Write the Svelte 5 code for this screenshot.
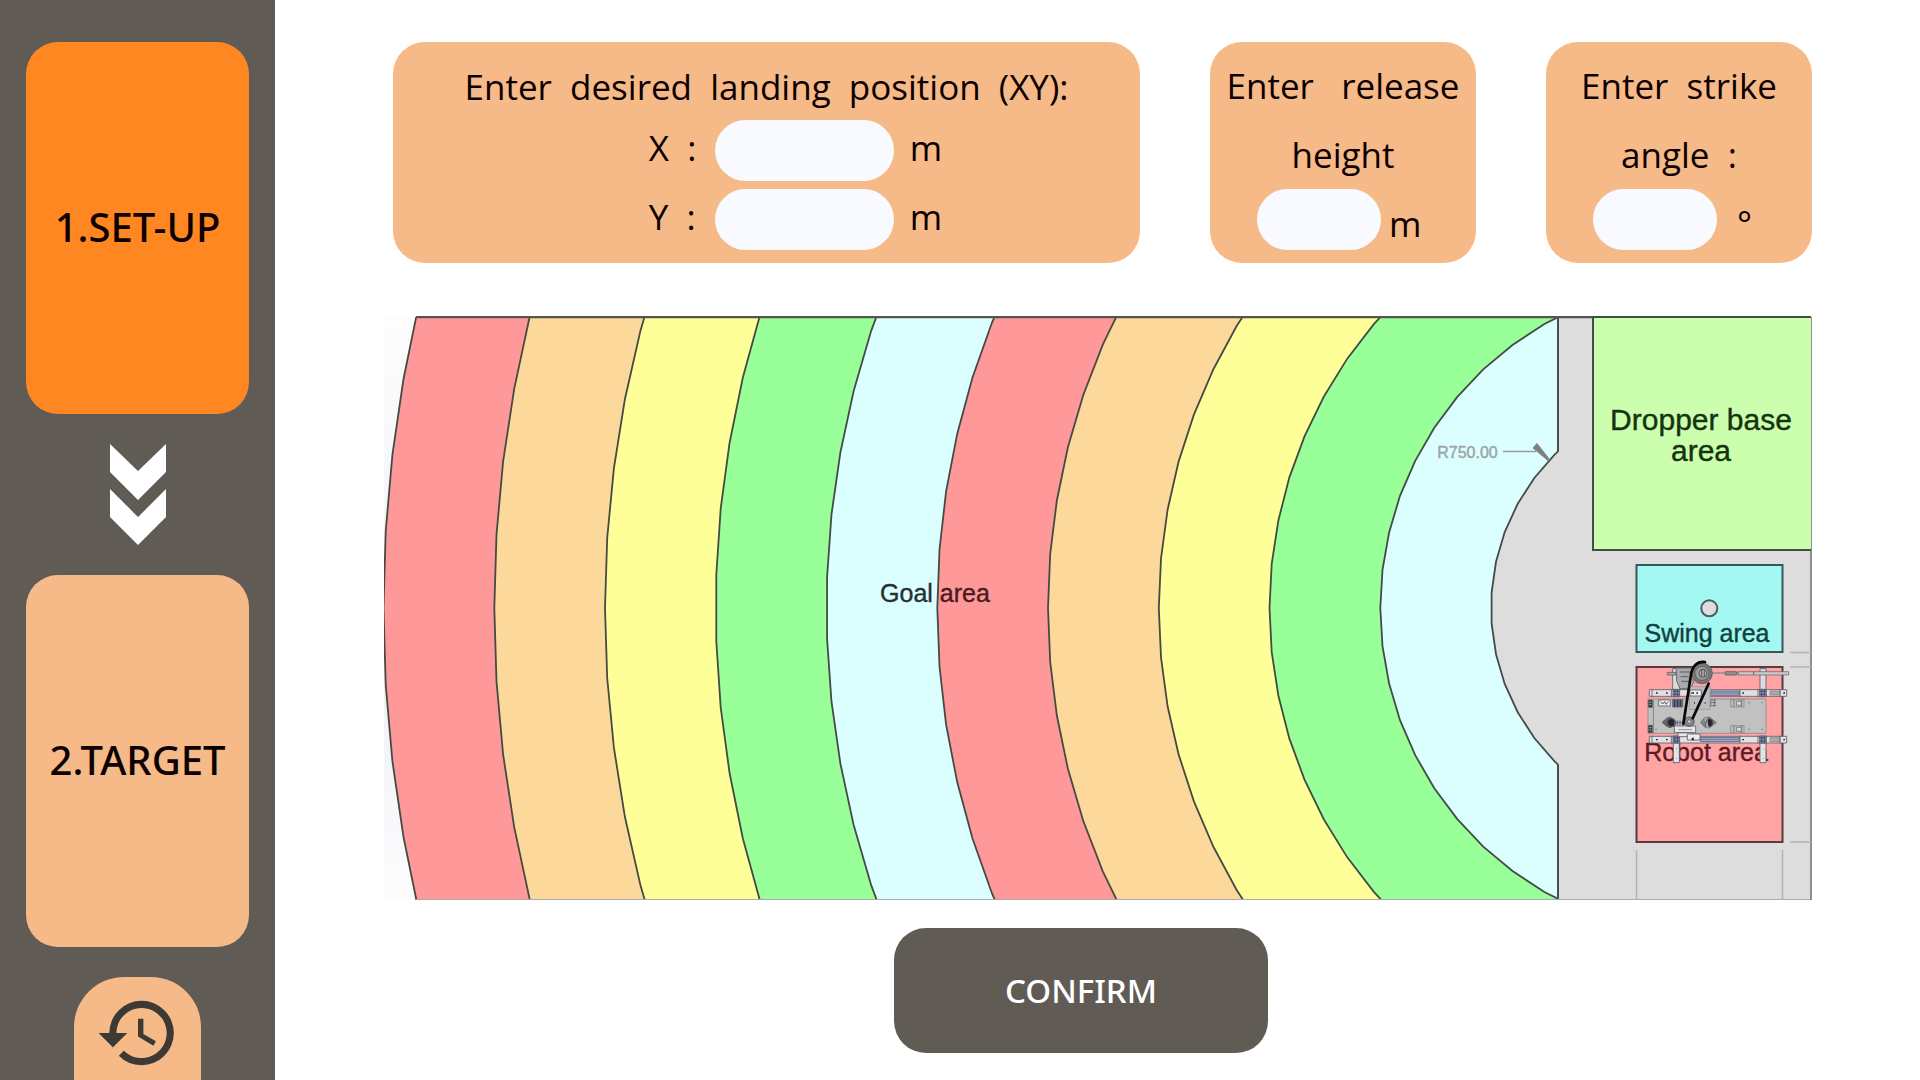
<script>
  let x = $state('');
  let y = $state('');
  let height = $state('');
  let angle = $state('');

  // Field geometry: concentric goal rings around the swing pivot.
  const cx = 1708;
  const cy = 608;
  const innerRadius = 217;
  const ringWidth = 110.75;
  const palette = ['#ff9999', '#fcd89b', '#ffff99', '#99ff99', '#dbffff'];

  // Edges that have a flat facet, not a corner, at the middle.
  const flatMiddle = [3, 4, 10];

  // Each ring edge is a faceted half circle, with coarser facets on small radii.
  function edge(radius, phase) {
    const step = 8.2 * Math.sqrt(innerRadius / radius);
    const count = Math.ceil(90 / step);
    const points = [];
    for (let i = -count; i <= count; i++) {
      const a = ((i + phase) * step * Math.PI) / 180;
      points.push(`${(cx - radius * Math.cos(a)).toFixed(1)},${(cy + radius * Math.sin(a)).toFixed(1)}`);
    }
    return points.join(' ');
  }

  const rings = Array.from({ length: 11 }, (_, i) => ({
    points: edge(innerRadius + ringWidth * (10 - i), flatMiddle.includes(i) ? 0.5 : 0),
    fill: i < 10 ? palette[i % 5] : '#dddddd'
  }));
</script>

<div class="app">
  <nav class="sidebar" aria-label="Steps">
    <button class="step active" type="button">1.SET-UP</button>
    <svg class="chevrons" viewBox="0 0 56 101" aria-hidden="true">
      <path d="M0 0 28 27 56 0V28L28 56 0 28ZM0 45 28 73 56 45V73L28 101 0 73Z" fill="#fff" />
    </svg>
    <button class="step" type="button">2.TARGET</button>
    <button class="history" type="button" aria-label="History">
      <svg viewBox="0 0 24 24" aria-hidden="true">
        <path
          fill="#3d3935"
          d="M13 3a9 9 0 0 0-9 9H1l3.89 3.89.07.14L9 12H6c0-3.87 3.13-7 7-7s7 3.13 7 7-3.13 7-7 7c-1.93 0-3.68-.79-4.94-2.06l-1.42 1.42A8.95 8.95 0 0 0 13 21a9 9 0 0 0 0-18zm-1 5v5l4.28 2.54.72-1.21-3.5-2.08V8H12z"
        />
      </svg>
    </button>
  </nav>

  <main>
    <form class="cards" id="setup" onsubmit={(e) => e.preventDefault()}>
      <fieldset class="card position">
        <legend class="title">Enter&nbsp; desired&nbsp; landing&nbsp; position&nbsp; (XY):</legend>
        <div class="row">
          <label for="pos-x">X&nbsp; :</label>
          <input id="pos-x" type="text" bind:value={x} />
          <span>m</span>
        </div>
        <div class="row">
          <label for="pos-y">Y&nbsp; :</label>
          <input id="pos-y" type="text" bind:value={y} />
          <span>m</span>
        </div>
      </fieldset>

      <div class="card small">
        <label for="height">Enter&nbsp;&nbsp; release<br />height</label>
        <div class="row">
          <input id="height" type="text" bind:value={height} />
          <span>m</span>
        </div>
      </div>

      <div class="card small">
        <label for="angle">Enter&nbsp; strike<br />angle&nbsp; :</label>
        <div class="row degrees">
          <input id="angle" type="text" bind:value={angle} />
          <span>°</span>
        </div>
      </div>
    </form>

    <svg class="field" viewBox="384 316 1428 584" role="img" aria-label="Field map">
      <defs>
        <clipPath id="goal"><rect x="384" y="317" width="1174" height="583" /></clipPath>
        <linearGradient id="corner" x1="0" y1="0" x2="0" y2="1">
          <stop offset="0" stop-color="#fdfdfd" />
          <stop offset="0.6" stop-color="#eef0f6" />
          <stop offset="1" stop-color="#fdfdfd" />
        </linearGradient>
      </defs>

      <rect x="384" y="317" width="60" height="583" fill="url(#corner)" />
      <rect x="1557" y="317" width="254" height="583" fill="#dddddd" />
      <g clip-path="url(#goal)" stroke="#444a44" stroke-width="1.8">
        {#each rings as ring}
          <polygon points={ring.points} fill={ring.fill} />
        {/each}
      </g>

      <g fill="none" stroke="#47505a" stroke-width="2">
        <path d="M1558 317V452M1558 764V900" />
        <path d="M416 317H1811" stroke="#55554f" stroke-width="2.4" />
        <path d="M416 899.500H1811" stroke="#aaa" stroke-width="1" />
        <path d="M1811 317V900" stroke="#777" stroke-width="1.600" />
      </g>

      <path d="M1811 317H1593V550H1811" fill="#ccffad" stroke="#405040" stroke-width="2" />
      <rect x="1636.500" y="565" width="146" height="87" fill="#a3f9f1" stroke="#34575a" stroke-width="2" />
      <rect x="1636.500" y="667" width="146" height="175" fill="#ffa3a5" stroke="#5a3a3e" stroke-width="2" />
      <circle cx="1709.300" cy="608.300" r="8" fill="#dddddd" stroke="#4b5d60" stroke-width="2" />
      <path
        d="M1790 652.500H1811M1790 667H1811M1790 842H1811M1636.500 850V900M1782.500 850V900"
        stroke="#b4b4b4"
        stroke-width="1.500"
      />

      <path d="M1503 451.500H1536" stroke="#999" stroke-width="1.300" />
      <path d="M1533 448 1537 443.500 1549.500 459.500 1548 460.500Z" fill="#808080" stroke="#808080" />

      <g class="labels">
        <text x="1701" y="430" font-size="30" fill="#16330f" stroke="#16330f">Dropper base</text>
        <text x="1701" y="461" font-size="30" fill="#16330f" stroke="#16330f">area</text>
        <text x="1707" y="642" font-size="25" fill="#123f40" stroke="#123f40">Swing area</text>
        <text x="1706" y="761" font-size="25" fill="#5e1a22" stroke="#5e1a22">Robot area</text>
        <text x="935" y="601.500" font-size="25" fill="#263038" stroke="#263038">Goal <tspan fill="#4a1a20" stroke="#4a1a20">area</tspan></text>
        <text x="1467.500" y="458" font-size="16" fill="#9aa5a5" stroke="#9aa5a5">R750.00</text>
      </g>

      <!-- Robot: frame, rails, base plate, motor and belt -->
      <g transform="translate(1630 650) scale(0.3333)" stroke="#5c5f66" stroke-width="2.500" fill="#dcdce0">
        <path d="M390 56h18v64h-18zM128 56h22v64h-22z" />
        <path d="M245 69H365" stroke="#8e8e92" stroke-width="4" />
        <path d="M286 65h34v10h-34z" fill="#909096" />
        <path d="M325 65h46v10h-46zM371 65h105v10h-105z" fill="#c8c8c8" stroke-width="2" />
        <path d="M112 67h26v8h-26zM138 54h52v16l-8 12 10 14-12 20h-30l-10-22z" fill="#a9a9ad" />
        <path d="M150 66h30M152 80h24M154 94h28" stroke="#4c4c50" />

        <path d="M54 147H408V250H54z" fill="#c1c1c2" stroke="#8c8c90" />
        <path d="M70 148V249" stroke="#77777b" />
        <path d="M55 150h12v22h-12zM55 226h12v22h-12z" fill="#34363e" />
        <path d="M58 157h6M58 164h6M58 233h6M58 240h6" stroke="#c8c8cc" />
        <path d="M86 150h35v18h-35z" fill="#eee" />
        <path d="M92 155l6 7 6-7 4 8 8-8" fill="none" stroke="#333" />
        <path d="M128 149h30v22h-30z" fill="#626b8c" />
        <path d="M134 150v20M143 150v20M151 150v20" stroke="#20242e" />
        <path d="M240 150h18M240 158h18M240 167h18M242 150v20M254 150v20" stroke="#5a617a" />
        <path d="M302 149h40v22h-40zM302 227h40v22h-40z" fill="#bbb" stroke="#888" />
        <path d="M312 149v22M320 154h14v12h-14zM334 149v22M312 227v22M320 232h14v12h-14zM334 227v22" fill="#ddd" stroke="#77777b" />
        <path d="M355 158h4M394 158h4M355 238h4M394 238h4M76 238h4" stroke="#555" />

        <path d="M58 119H470V139H58z" fill="#e1e1e5" />
        <path d="M242 123H328V136H242z" fill="#9aa6cf" />
        <path d="M242 129H328" stroke="#66719b" />
        <path d="M58 259H470V279H58z" fill="#e1e1e5" />
        <path d="M212 262H328V275H212z" fill="#9aa6cf" />
        <path d="M212 268H328" stroke="#66719b" />
        <path d="M420 123h30v12h-30zM420 263h30v12h-30z" fill="#aaa" stroke="#888" />
        <path d="M66 117v24M124 117v24M330 117v24M384 117v24M66 257v24M124 257v24M330 257v24M384 257v24M450 117v24M450 257v24" />
        <path d="M78 129h5M108 129h5M337 129h5M460 129h5M78 269h5M108 269h5M337 269h5M460 269h5" stroke="#222" stroke-width="4" />
        <path d="M389 118h20v22h-20zM389 258h20v22h-20zM129 118h20v22h-20zM129 258h20v22h-20z" fill="#8e97b5" />
        <path d="M389 124h20M389 133h20M395 118v22M403 118v22M389 264h20M389 273h20M395 258v22M403 258v22M129 124h20M129 133h20M135 118v22M143 118v22M129 264h20M129 273h20M135 258v22M143 258v22" stroke="#39415e" />
        <path d="M390 280h18v58h-18zM130 280h18v58h-18z" fill="#e4e4e8" />
        <path d="M399 325h1M139 325h1M399 296h1M139 296h1" stroke="#333" stroke-width="4" />

        <path d="M178 110H240V178H178z" fill="#bcbcbe" stroke="#9a9a9d" />
        <path d="M180 120h34v18h-34z" fill="#f0f0f0" />
        <path d="M184 129h8M199 129h5M192 159h3M224 159h3" stroke="#222" stroke-width="4" />
        <path d="M96 217l14-12 10-4 14 8 4 8-4 10-14 6-12-5z" fill="#626268" />
        <circle cx="124" cy="218" r="12" fill="#25262b" />
        <path d="M212 217l12-14 14-2 12 10 9 7-9 6-12 10-14-3z" fill="#85858a" />
        <circle cx="237" cy="218" r="12" fill="#25262b" />
        <path d="M224 204l8 28M230 202l4 32" stroke="#d0d0d0" />
        <path d="M130 218h30M134 211v14M142 211v14M150 211v14" stroke="#555c78" />
        <path d="M133 228h64v20h-64zM144 248h42v12h-42z" fill="#e7e7e9" />
        <path d="M146 239h40" stroke="#808085" />
        <path d="M172 252h38v18h-38z" fill="#eee" />
        <path d="M183 267l8-5v10z" fill="#111" stroke="none" />
        <circle cx="178" cy="215" r="14" fill="#8e8e92" stroke="#3b3b3e" />
        <circle cx="178" cy="215" r="6" fill="#c4c4c8" />
        <circle cx="216" cy="70" r="31" fill="#777779" stroke="#55555a" />
        <circle cx="216" cy="70" r="21" fill="#99999b" stroke="#5d5d60" />
        <circle cx="219" cy="70" r="12" fill="#aaa" stroke="#47474a" />
        <path d="M215 60v20M223 60v20" stroke="#47474a" />
        <path d="M236 101 188 205M160 222 182 80C185 48 202 33 225 36" fill="none" stroke="#080808" stroke-width="8" stroke-linecap="round" />
      </g>
    </svg>

    <div class="actions">
      <button class="confirm" type="submit" form="setup">CONFIRM</button>
    </div>
  </main>
</div>

<style>
  :global(body) {
    margin: 0;
    background: #fff;
  }

  .app {
    display: flex;
    min-height: 100vh;
    font-family: 'Noto Sans', 'Open Sans', sans-serif;
    color: #0c0000;
  }

  button,
  input {
    border: 0;
    padding: 0;
    font: inherit;
    color: inherit;
  }

  button {
    cursor: pointer;
  }

  .sidebar {
    box-sizing: border-box;
    flex: 0 0 275px;
    display: flex;
    flex-direction: column;
    align-items: center;
    gap: 30px;
    padding: 42px 26px 0;
    background: #615b56;
  }

  .step {
    width: 100%;
    height: 372px;
    padding-bottom: 4px;
    border-radius: 32px;
    background: #f5ba88;
    font-size: 40px;
    font-weight: 500;
  }

  .step.active {
    background: #ff8722;
  }

  .chevrons {
    width: 56px;
    height: 101px;
  }

  .history {
    flex: 1;
    display: flex;
    justify-content: center;
    align-items: flex-start;
    width: 127px;
    padding-top: 13px;
    border-radius: 50px 50px 0 0;
    background: #f5ba88;
  }

  .history svg {
    width: 86px;
    height: 86px;
  }

  main {
    flex: 1;
    min-width: 0;
    padding: 42px 108px 28px 109px;
  }

  .cards {
    display: grid;
    grid-template-columns: 747fr 266fr 266fr;
    gap: 70px;
    padding-left: 9px;
    margin-bottom: 53px;
    font-family: 'Open Sans', 'Noto Sans', sans-serif;
    font-size: 35px;
    font-weight: 400;
    line-height: 69px;
  }

  .card {
    box-sizing: border-box;
    min-width: 0;
    height: 221px;
    margin: 0;
    border: 0;
    border-radius: 32px;
    background: #f5ba88;
    white-space: nowrap;
  }

  .card input {
    box-sizing: border-box;
    height: 61px;
    border-radius: 31px;
    padding: 0 24px;
    background: #f9faff;
  }

  .row {
    display: flex;
    align-items: center;
  }

  .position {
    padding: 16px 0 0;
  }

  .title {
    float: left;
    width: 100%;
    padding: 0;
    line-height: 58px;
    text-align: center;
  }

  .position .row {
    clear: both;
    justify-content: center;
    gap: 16px;
    padding-left: 58px;
    height: 69px;
    line-height: 60px;
  }

  .position .row label,
  .position .row span {
    padding-bottom: 5px;
  }

  .position label {
    width: 50px;
  }

  .position input {
    width: 179px;
  }

  .small {
    padding-top: 9px;
  }

  .small label {
    display: block;
    text-align: center;
  }

  .small .row {
    gap: 8px;
    padding-left: 47px;
    align-items: flex-start;
  }

  .small input {
    width: 124px;
  }

  .small .degrees {
    gap: 20px;
  }

  .field {
    display: block;
    width: 100%;
  }

  .labels {
    font-family: 'Liberation Sans', Arial, sans-serif;
    text-anchor: middle;
    stroke-width: 0.4px;
  }

  .actions {
    display: flex;
    justify-content: center;
    padding: 28px 34px 0 0;
  }

  .confirm {
    width: 374px;
    height: 125px;
    border-radius: 32px;
    background: #615b56;
    color: #fff;
    font-size: 33px;
    font-weight: 500;
  }
</style>
